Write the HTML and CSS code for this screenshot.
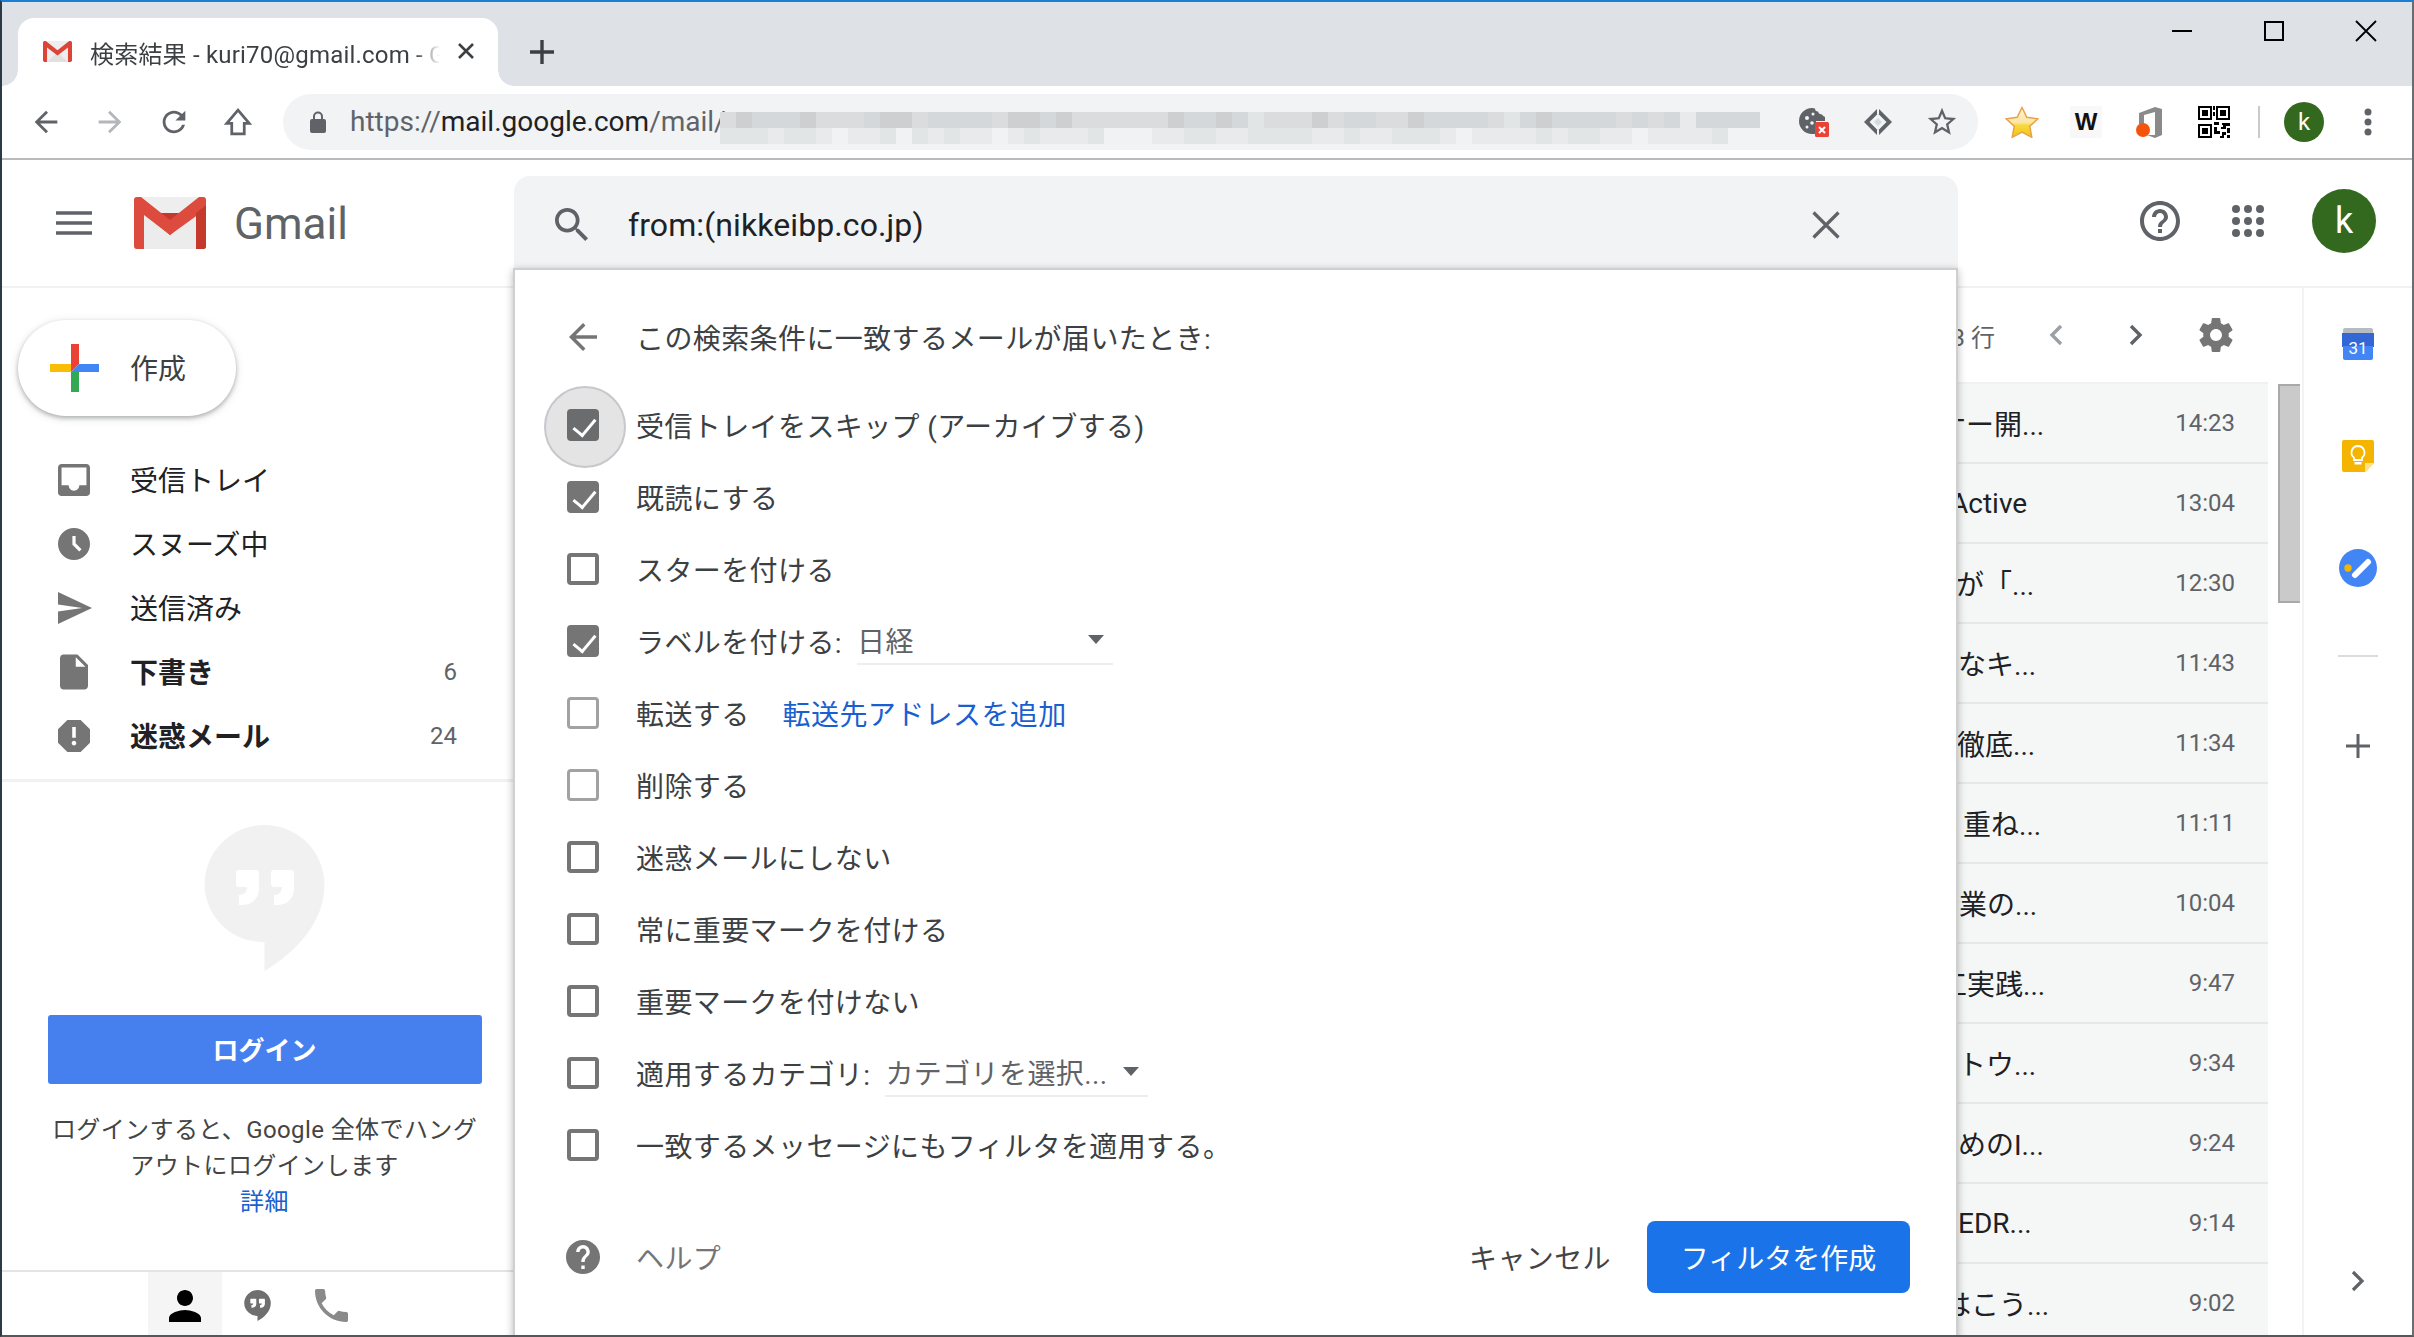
FILE: index.html
```html
<!DOCTYPE html>
<html lang="ja">
<head>
<meta charset="utf-8">
<title>検索結果 - kuri70@gmail.com - Gmail</title>
<link rel="stylesheet" href="styles.css">
</head>
<body>
<div class="window">
  <header class="tabstrip">
    <div class="tab">
      <svg class="favicon" viewBox="0 0 72 52"><rect width="72" height="52" rx="3" fill="#eee"/><path d="M10 52 36 28l26 24z" fill="#e0e0e0"/><path d="M0 3 3 0h4l29 23L65 0h4l3 3v46l-3 3h-7V16L36 36 10 16v36H3l-3-3z" fill="#dc4437"/></svg>
      <span class="tab-title">検索結果 - kuri70@gmail.com - G</span>
      <svg class="tab-close" viewBox="0 0 18 18"><path d="M2 2l14 14M16 2 2 16" stroke="#3c4043" stroke-width="2.6" fill="none"/></svg>
    </div>
    <svg class="newtab" viewBox="0 0 24 24"><path d="M12 0v24M0 12h24" stroke="#3c4043" stroke-width="3.4" fill="none"/></svg>
    <div class="winctl">
      <span class="winbtn"><svg width="20" height="20" viewBox="0 0 20 20"><path d="M0 10h20" stroke="#000" stroke-width="2" fill="none"/></svg></span>
      <span class="winbtn"><svg width="20" height="20" viewBox="0 0 20 20"><rect x="1" y="1" width="18" height="18" stroke="#000" stroke-width="2" fill="none"/></svg></span>
      <span class="winbtn"><svg width="22" height="22" viewBox="0 0 22 22"><path d="M1 1l20 20M21 1 1 21" stroke="#000" stroke-width="1.8" fill="none"/></svg></span>
    </div>
  </header>

  <nav class="toolbar">
    <span class="slot first"><svg width="34" height="34" viewBox="0 0 24 24"><path class="i-dark" d="M20 11H7.83l5.59-5.59L12 4l-8 8 8 8 1.41-1.41L7.83 13H20v-2z"/></svg></span>
    <span class="slot"><svg width="34" height="34" viewBox="0 0 24 24"><path fill="#b4b6b9" d="M12 4l-1.41 1.41L16.17 11H4v2h12.17l-5.58 5.59L12 20l8-8z"/></svg></span>
    <span class="slot"><svg width="34" height="34" viewBox="0 0 24 24"><path class="i-dark" d="M17.65 6.35C16.2 4.9 14.21 4 12 4c-4.42 0-7.99 3.58-7.99 8s3.57 8 7.99 8c3.73 0 6.84-2.55 7.73-6h-2.08c-.82 2.33-3.04 4-5.65 4-3.31 0-6-2.69-6-6s2.69-6 6-6c1.66 0 3.14.69 4.22 1.78L13 11h7V4l-2.35 2.35z"/></svg></span>
    <span class="slot"><svg width="30" height="30" viewBox="0 0 24 24"><path d="M12 2.5 3 13h4v8.500h10V13h4z" fill="none" stroke="#5f6368" stroke-width="2.200"/></svg></span>
    <div class="omnibox">
      <svg class="lock" viewBox="0 0 16 22"><path fill="#5f6368" d="M2 8h1V5.500a5 5 0 0 1 10 0V8h1a2 2 0 0 1 2 2v10a2 2 0 0 1-2 2H2a2 2 0 0 1-2-2V10a2 2 0 0 1 2-2zm3 0h6V5.500a3 3 0 0 0-6 0z"/></svg>
      <span class="url">https://<b>mail.google.com</b>/mail/</span>
      <div class="mosaic"><i class="c"></i><i class="a"></i><i class="b"></i><i class="b"></i><i class="b"></i><i class="a"></i><i class="c"></i><i class="c"></i><i class="c"></i><i class="b"></i><i class="a"></i><i class="a"></i><i class="c"></i><i class="b"></i><i class="b"></i><i class="b"></i><i class="b"></i><i class="c"></i><i class="a"></i><i class="a"></i><i class="b"></i><i class="a"></i><i class="c"></i><i class="c"></i><i class="c"></i><i class="c"></i><i class="c"></i><i class="c"></i><i class="a"></i><i class="b"></i><i class="b"></i><i class="a"></i><i class="b"></i><i class="d"></i><i class="c"></i><i class="c"></i><i class="c"></i><i class="a"></i><i class="c"></i><i class="b"></i><i class="b"></i><i class="c"></i><i class="c"></i><i class="a"></i><i class="b"></i><i class="b"></i><i class="b"></i><i class="b"></i><i class="c"></i><i class="d"></i><i class="b"></i><i class="a"></i><i class="b"></i><i class="b"></i><i class="b"></i><i class="b"></i><i class="c"></i><i class="b"></i><i class="c"></i><i class="b"></i><i class="e"></i><i class="b"></i><i class="b"></i><i class="b"></i><i class="b"></i><i class="d"></i><i class="d"></i><i class="d"></i><i class="e"></i><i class="d"></i><i class="d"></i><i class="e"></i><i class="f"></i><i class="e"></i><i class="e"></i><i class="d"></i><i class="f"></i><i class="d"></i><i class="e"></i><i class="d"></i><i class="e"></i><i class="e"></i><i class="f"></i><i class="e"></i><i class="d"></i><i class="e"></i><i class="e"></i><i class="e"></i><i class="d"></i><i class="f"></i><i class="f"></i><i class="f"></i><i class="e"></i><i class="e"></i><i class="d"></i><i class="d"></i><i class="e"></i><i class="e"></i><i class="d"></i><i class="d"></i><i class="d"></i><i class="d"></i><i class="e"></i><i class="e"></i><i class="d"></i><i class="e"></i><i class="e"></i><i class="d"></i><i class="d"></i><i class="d"></i><i class="e"></i><i class="f"></i><i class="e"></i><i class="e"></i><i class="e"></i><i class="e"></i><i class="d"></i><i class="e"></i><i class="d"></i><i class="d"></i><i class="e"></i><i class="e"></i><i class="f"></i><i class="e"></i><i class="e"></i><i class="e"></i><i class="e"></i><i class="d"></i></div>
      <div class="omni-actions">
        <span class="slot"><svg width="32" height="32" viewBox="0 0 32 32"><path fill="#5f6368" d="M14 2c1 0 2 .2 3 .5 0 2 1 3 3 3 .5 2 2 3 4 3 .5 1 2 2 3 2.500V15H18v13h-4A13 13 0 0 1 14 2z"/><circle cx="9" cy="12" r="2" fill="#f1f3f4"/><circle cx="15" cy="8" r="1.500" fill="#f1f3f4"/><circle cx="14" cy="17" r="1.800" fill="#f1f3f4"/><circle cx="9" cy="21" r="1.500" fill="#f1f3f4"/><rect x="17" y="16" width="14" height="15" rx="1.500" fill="#ea4335"/><path d="M21 21l6 6M27 21l-6 6" stroke="#fff" stroke-width="2" fill="none"/></svg></span>
        <span class="slot"><svg width="30" height="30" viewBox="0 0 30 30"><path fill="#5f6368" d="M15 1 29 15 15 29 1 15z"/><path fill="#f1f3f4" d="M15 6.500l8.500 8.500-8.500 8.500L6.500 15zM14 0h2v7h-2zM14 23h2v7h-2z"/><path fill="#5f6368" d="M15 11l4 4-4 4-4-4z" opacity=".18"/></svg></span>
        <span class="slot"><svg width="34" height="34" viewBox="0 0 24 24"><path fill="#5f6368" d="M22 9.240l-7.190-.62L12 2 9.190 8.630 2 9.240l5.460 4.730L5.820 21 12 17.270 18.180 21l-1.630-7.030L22 9.240zM12 15.400l-3.760 2.270 1-4.280-3.320-2.880 4.380-.38L12 6.100l1.710 4.040 4.380.38-3.320 2.880 1 4.280L12 15.400z"/></svg></span>
      </div>
    </div>
    <span class="slot ext-first"><svg width="34" height="32" viewBox="0 0 34 32"><defs><linearGradient id="sg" x1="0" y1="0" x2="0" y2="1"><stop offset="0" stop-color="#fff3e0"/><stop offset=".5" stop-color="#fbe7a0"/><stop offset=".6" stop-color="#f7d93a"/><stop offset="1" stop-color="#f3c21a"/></linearGradient></defs><path d="M17 1.500l4.800 9.800 11 1.500-8 7.500 2 11L17 26l-9.800 5.300 2-11-8-7.500 11-1.500z" fill="url(#sg)" stroke="#e8a24a" stroke-width="1.500"/></svg></span>
    <span class="slot"><span class="ext-w">W</span></span>
    <span class="slot"><svg width="30" height="32" viewBox="0 0 30 32"><path fill="#8a8a8a" d="M4 7 20 1l7 2v26l-7 3-8-3h8V6L9 9v9H4z"/><circle cx="8" cy="24" r="7" fill="#f4540c"/></svg></span>
    <span class="slot"><svg width="32" height="32" viewBox="0 0 32 32"><path fill="#000" d="M0 0h14v14H0zM2 2v10h10V2zM4 4h6v6H4zM18 0h14v14H18zm2 2v10h10V2zm2 2h6v6h-6zM0 18h14v14H0zm2 2v10h10V20zm2 2h6v6H4zM15 0h2v4h-2zM15 6h2v4h-2zM16 16h5v3h-5zM24 17h8v3h-4v3h-5v-2h2v-2h-1zM16 21h3v4h3v3h-6zM29 22h3v5h-3zM24 26h4v3h-2v3h-4v-2h2zM29 29h3v3h-3z"/></svg></span>
    <span class="sep"></span>
    <span class="avatar-sm">k</span>
    <span class="slot dots"><svg width="8" height="28" viewBox="0 0 8 28"><circle cx="4" cy="4" r="3.500" fill="#5f6368"/><circle cx="4" cy="14" r="3.500" fill="#5f6368"/><circle cx="4" cy="24" r="3.500" fill="#5f6368"/></svg></span>
  </nav>

  <header class="gm-head">
    <div class="gm-brand">
      <svg class="burger" viewBox="0 0 36 24"><path d="M0 2h36M0 12h36M0 22h36" stroke="#5f6368" stroke-width="3.400" fill="none"/></svg>
      <svg class="logo" viewBox="0 0 72 52"><rect width="72" height="52" rx="3" fill="#eeeeee"/><path d="M10 52 36 29l26 23z" fill="#e2e2e2"/><path d="M10 52V16l26 22 26-22v36z" fill="#ececec"/><path d="M10 16 36 38 62 16 72 3v46a3 3 0 0 1-3 3h-7V16z" fill="#c5392c"/><path d="M0 3a3 3 0 0 1 3-3h4l29 23L65 0h4a3 3 0 0 1 3 3v9L36 38 10 18v34H3a3 3 0 0 1-3-3z" fill="#dd4b3e"/><path d="M62 16 72 8v41a3 3 0 0 1-3 3h-7z" fill="#c5392c"/></svg>
      <span class="wordmark">Gmail</span>
    </div>
    <div class="searchbox">
      <svg class="s-icon" viewBox="3 3 18 18"><path fill="#5f6368" d="M15.500 14h-.79l-.28-.27C15.410 12.590 16 11.110 16 9.500 16 5.910 13.090 3 9.500 3S3 5.910 3 9.500 5.910 16 9.500 16c1.610 0 3.090-.59 4.230-1.570l.27.28v.79l5 4.990L20.490 19l-4.990-5zm-6 0C7.010 14 5 11.990 5 9.500S7.010 5 9.500 5 14 7.010 14 9.500 11.990 14 9.500 14z"/></svg>
      <span class="s-text">from:(nikkeibp.co.jp)</span>
      <svg class="s-close" viewBox="0 0 28 28"><path d="M1.500 1.500l25 25M26.500 1.500l-25 25" stroke="#5f6368" stroke-width="3.200" fill="none"/></svg>
    </div>
    <div class="gm-right">
      <svg class="h-help" viewBox="2 2 20 20"><path fill="#5f6368" d="M11 18h2v-2h-2v2zm1-16C6.480 2 2 6.480 2 12s4.480 10 10 10 10-4.480 10-10S17.520 2 12 2zm0 18c-4.410 0-8-3.590-8-8s3.590-8 8-8 8 3.590 8 8-3.590 8-8 8zm0-14c-2.210 0-4 1.790-4 4h2c0-1.100.9-2 2-2s2 .9 2 2c0 2-3 1.750-3 5h2c0-2.250 3-2.500 3-5 0-2.210-1.790-4-4-4z"/></svg>
      <svg class="h-apps" viewBox="0 0 32 32"><g fill="#5f6368"><circle cx="4" cy="4" r="4"/><circle cx="16" cy="4" r="4"/><circle cx="28" cy="4" r="4"/><circle cx="4" cy="16" r="4"/><circle cx="16" cy="16" r="4"/><circle cx="28" cy="16" r="4"/><circle cx="4" cy="28" r="4"/><circle cx="16" cy="28" r="4"/><circle cx="28" cy="28" r="4"/></g></svg>
      <span class="avatar-lg">k</span>
    </div>
  </header>

  <div class="gm-body">
    <aside class="sidebar">
      <button class="compose">
        <svg class="c-plus" viewBox="0 0 49 48"><polygon points="21,0 29,0 29,20 21,28" fill="#ea4335"/><polygon points="29,20 49,20 49,28 21,28" fill="#4285f4"/><polygon points="21,28 29,28 29,48 21,48" fill="#34a853"/><polygon points="0,20 21,20 21,28 0,28" fill="#fbbc05"/></svg>
        <span class="c-label">作成</span>
      </button>
      <ul class="nav">
        <li><span class="n-icon"><svg width="32" height="32" viewBox="3 3 18 18"><path d="M19 3H5c-1.100 0-2 .9-2 2v14c0 1.100.9 2 2 2h14c1.100 0 2-.9 2-2V5c0-1.100-.9-2-2-2zm0 12h-4c0 1.660-1.350 3-3 3s-3-1.340-3-3H5V5h14v10z"/></svg></span><span class="n-label">受信トレイ</span></li>
        <li><span class="n-icon"><svg width="32" height="32" viewBox="2 2 20 20"><path d="M11.990 2C6.470 2 2 6.480 2 12s4.470 10 9.990 10C17.520 22 22 17.520 22 12S17.520 2 11.990 2zm3.300 14.710L11 12.410V7h2v4.590l3.710 3.710-1.420 1.410z"/></svg></span><span class="n-label">スヌーズ中</span></li>
        <li><span class="n-icon"><svg width="34" height="32" viewBox="2 3 21 18" preserveAspectRatio="none"><path d="M2 21l21-9L2 3v7l15 2-15 2z"/></svg></span><span class="n-label">送信済み</span></li>
        <li class="strong"><span class="n-icon"><svg class="ni-draft" width="28" height="36" viewBox="4 2 16 20"><path d="M6 2c-1.100 0-2 .9-2 2v16c0 1.100.9 2 2 2h12c1.100 0 2-.9 2-2V8l-6-6H6zm7 7V3.500L18.500 9H13z"/></svg></span><span class="n-label">下書き</span><span class="n-count">6</span></li>
        <li class="strong"><span class="n-icon"><svg width="32" height="32" viewBox="3 3 18 18"><path d="M15.730 3H8.270L3 8.270v7.460L8.270 21h7.460L21 15.730V8.270L15.730 3zM12 17.300c-.72 0-1.300-.58-1.300-1.300 0-.72.58-1.300 1.300-1.300.72 0 1.300.58 1.300 1.300 0 .72-.58 1.300-1.300 1.300zm1-4.300h-2V7h2v6z"/></svg></span><span class="n-label">迷惑メール</span><span class="n-count">24</span></li>
      </ul>
      <section class="hangouts">
        <svg class="bubble" viewBox="0 0 121 146"><path fill="#f1f1f1" d="M60.500 0a60 60 0 0 1 60 60c0 38-30 68-60 86v-29a58.500 58.500 0 0 1-60-57 60 60 0 0 1 60-60z"/><path fill="#fff" d="M32 48a3 3 0 0 1 3-3h17a3 3 0 0 1 3 3v15c0 10-6 17-17 17h-3V70c5 0 8-3 8-8h-8a3 3 0 0 1-3-3zM67 48a3 3 0 0 1 3-3h17a3 3 0 0 1 3 3v15c0 10-6 17-17 17h-3V70c5 0 8-3 8-8h-8a3 3 0 0 1-3-3z"/></svg>
        <button class="login">ログイン</button>
        <p class="login-note">ログインすると、Google 全体でハング<br>アウトにログインします<br><a class="more">詳細</a></p>
      </section>
      <div class="side-tabs">
        <span class="s-tab on"><svg width="32" height="32" viewBox="4 4 16 16"><path d="M12 12c2.210 0 4-1.790 4-4s-1.790-4-4-4-4 1.790-4 4 1.790 4 4 4zm0 2c-2.670 0-8 1.340-8 4v2h16v-2c0-2.660-5.330-4-8-4z"/></svg></span>
        <span class="s-tab"><svg class="s-hang" width="27" height="31" viewBox="0 0 121 140"><path fill="#6f6f6f" d="M60.500 0a60 60 0 0 1 60 60c0 36-30 65-60 80v-23a58.500 58.500 0 0 1-60-57 60 60 0 0 1 60-60z"/><path fill="#fff" d="M28 42a3 3 0 0 1 3-3h21a3 3 0 0 1 3 3v20c0 10-6 18-19 18h-3V68c5 0 8-2 8-7h-10a3 3 0 0 1-3-3zM67 42a3 3 0 0 1 3-3h21a3 3 0 0 1 3 3v20c0 10-6 18-19 18h-3V68c5 0 8-2 8-7h-10a3 3 0 0 1-3-3z"/></svg></span>
        <span class="s-tab"><svg class="phone" width="33" height="33" viewBox="3 3 18 18"><path d="M6.620 10.790c1.440 2.830 3.760 5.140 6.590 6.590l2.200-2.200c.27-.27.67-.36 1.020-.24 1.120.37 2.330.57 3.570.57.55 0 1 .45 1 1V20c0 .55-.45 1-1 1-9.390 0-17-7.610-17-17 0-.55.45-1 1-1h3.500c.55 0 1 .45 1 1 0 1.250.2 2.450.57 3.570.11.35.03.74-.25 1.020l-2.200 2.200z"/></svg></span>
      </div>
    </aside>

    <main class="mail">
      <div class="mail-bar">
        <span class="m-count">1–50 / 1,283 行</span>
        <span class="m-btn"><svg width="14" height="22" viewBox="0 0 14 22"><path d="M12 2 3 11l9 9" fill="none" stroke="#9aa0a6" stroke-width="3.400"/></svg></span>
        <span class="m-btn"><svg width="14" height="22" viewBox="0 0 14 22"><path d="M2 2l9 9-9 9" fill="none" stroke="#5f6368" stroke-width="3.400"/></svg></span>
        <span class="m-btn"><svg width="34" height="34" viewBox="2 2 20 20"><path fill="#757575" d="M19.430 12.980c.04-.32.07-.64.07-.98s-.03-.66-.07-.98l2.110-1.650c.19-.15.24-.42.12-.64l-2-3.460c-.12-.22-.39-.3-.61-.22l-2.490 1c-.52-.4-1.080-.73-1.690-.98l-.38-2.650C14.460 2.180 14.250 2 14 2h-4c-.25 0-.46.18-.49.42l-.38 2.650c-.61.25-1.170.59-1.690.98l-2.490-1c-.23-.09-.49 0-.61.22l-2 3.460c-.13.22-.07.49.12.64l2.110 1.650c-.04.32-.07.65-.07.98s.03.66.07.98l-2.110 1.650c-.19.15-.24.42-.12.64l2 3.460c.12.22.39.3.61.22l2.490-1c.52.4 1.080.73 1.690.98l.38 2.650c.03.24.24.42.49.42h4c.25 0 .46-.18.49-.42l.38-2.650c.61-.25 1.170-.59 1.690-.98l2.490 1c.23.09.49 0 .61-.22l2-3.460c.12-.22.07-.49-.12-.64l-2.110-1.650zM12 15.500c-1.930 0-3.500-1.570-3.500-3.500s1.570-3.500 3.500-3.500 3.500 1.570 3.500 3.500-1.570 3.500-3.500 3.500z"/></svg></span>
      </div>
      <div class="mail-list">
        <div class="rows">
          <div class="row"><span class="subj">ナー開...</span><span class="time">14:23</span></div>
          <div class="row"><span class="subj">Active</span><span class="time">13:04</span></div>
          <div class="row"><span class="subj">が「...</span><span class="time">12:30</span></div>
          <div class="row"><span class="subj">要なキ...</span><span class="time">11:43</span></div>
          <div class="row"><span class="subj">徹底...</span><span class="time">11:34</span></div>
          <div class="row"><span class="subj">重ね...</span><span class="time">11:11</span></div>
          <div class="row"><span class="subj">企業の...</span><span class="time">10:04</span></div>
          <div class="row"><span class="subj">工実践...</span><span class="time">9:47</span></div>
          <div class="row"><span class="subj">トウ...</span><span class="time">9:34</span></div>
          <div class="row"><span class="subj">めのI...</span><span class="time">9:24</span></div>
          <div class="row"><span class="subj">EDR...</span><span class="time">9:14</span></div>
          <div class="row"><span class="subj">はこう...</span><span class="time">9:02</span></div>
        </div>
        <div class="scroll"><div class="thumb"></div></div>
      </div>
    </main>

    <aside class="rail">
      <svg class="r-cal" viewBox="0 0 32 32"><rect x="1" y="0" width="30" height="8" rx="2" fill="#b7bcc2"/><rect y="5" width="32" height="14" fill="#3367d6"/><path d="M1 18h30v12a2 2 0 0 1-2 2H3a2 2 0 0 1-2-2z" fill="#4285f4"/><text x="16" y="26" class="r-cal-t">31</text></svg>
      <svg class="r-keep" viewBox="0 0 32 32"><path d="M2 0h28a2 2 0 0 1 2 2v21l-9 9H2a2 2 0 0 1-2-2V2a2 2 0 0 1 2-2z" fill="#f4b400"/><path d="M32 23h-9v9z" fill="#fde293"/><path d="M16 6a6.500 6.500 0 0 0-4 11.600V20h8v-2.400A6.500 6.500 0 0 0 16 6z" fill="none" stroke="#fff" stroke-width="1.800"/><path d="M12.500 22h7v2.500h-7z" fill="#fff"/></svg>
      <svg class="r-tasks" viewBox="0 0 38 38"><circle cx="19" cy="19" r="19" fill="#4285f4"/><path d="M16 26 29 13" stroke="#fff" stroke-width="6" stroke-linecap="round" fill="none"/><circle cx="9" cy="19" r="3.700" fill="#f4b400"/></svg>
      <span class="r-sep"></span>
      <svg class="r-plus" viewBox="0 0 24 24"><path d="M12 0v24M0 12h24" stroke="#5f6368" stroke-width="3" fill="none"/></svg>
      <svg class="r-chev" viewBox="0 0 14 22"><path d="M2 2l9 9-9 9" fill="none" stroke="#5f6368" stroke-width="3.200"/></svg>
    </aside>
  </div>

  <section class="dialog">
    <div class="d-head">
      <svg class="d-back" viewBox="4 4 16 16"><path fill="#757575" d="M20 11H7.830l5.590-5.590L12 4l-8 8 8 8 1.410-1.410L7.830 13H20v-2z"/></svg>
      <span>この検索条件に一致するメールが届いたとき:</span>
    </div>
    <ul class="opts">
      <li><span class="cb on hover"></span><span>受信トレイをスキップ (アーカイブする)</span></li>
      <li><span class="cb on"></span><span>既読にする</span></li>
      <li><span class="cb"></span><span>スターを付ける</span></li>
      <li><span class="cb on"></span><span>ラベルを付ける:</span><span class="sel sel-label">日経</span></li>
      <li><span class="cb dim"></span><span>転送する</span><a class="addfwd">転送先アドレスを追加</a></li>
      <li><span class="cb dim"></span><span>削除する</span></li>
      <li><span class="cb"></span><span>迷惑メールにしない</span></li>
      <li><span class="cb"></span><span>常に重要マークを付ける</span></li>
      <li><span class="cb"></span><span>重要マークを付けない</span></li>
      <li><span class="cb"></span><span>適用するカテゴリ:</span><span class="sel sel-cat">カテゴリを選択...</span></li>
      <li><span class="cb"></span><span>一致するメッセージにもフィルタを適用する。</span></li>
    </ul>
    <div class="d-foot">
      <svg class="d-help" viewBox="2 2 20 20"><path fill="#757575" d="M12 2C6.480 2 2 6.480 2 12s4.480 10 10 10 10-4.480 10-10S17.520 2 12 2zm1 17h-2v-2h2v2zm2.070-7.750l-.9.92C13.450 12.900 13 13.500 13 15h-2v-.5c0-1.100.45-2.100 1.170-2.830l1.240-1.260c.37-.36.59-.86.59-1.410 0-1.100-.9-2-2-2s-2 .9-2 2H8c0-2.210 1.790-4 4-4s4 1.790 4 4c0 .88-.36 1.680-.93 2.250z"/></svg>
      <span class="d-helpt">ヘルプ</span>
      <span class="d-cancel">キャンセル</span>
      <button class="d-create">フィルタを作成</button>
    </div>
  </section>
</div>
</body>
</html>
```
FILE: styles.css
```css
* { box-sizing: border-box; }
html, body { margin: 0; padding: 0; }
body { width: 2414px; height: 1337px; overflow: hidden; background: #26323c; font-family: Roboto, "Noto Sans CJK JP", sans-serif; }
ul { list-style: none; margin: 0; padding: 0; }
p { margin: 0; }
button { border: 0; font: inherit; cursor: pointer; }

.window { position: relative; width: 2414px; height: 1337px; display: flex; flex-direction: column; overflow: hidden; background: #fff;
  border-top: 2px solid #1a7fd4; border-left: 2px solid #2b3a46; border-right: 2px solid #6a6d70; border-bottom: 2px solid #55585b; }

/* tab strip */
.tabstrip { flex: none; height: 84px; background: #dee1e6; display: flex; padding-left: 16px; }
.tab { position: relative; margin-top: 16px; width: 480px; height: 68px; background: #fff; border-radius: 16px 16px 0 0; display: flex; align-items: center; padding-left: 25px; }
.tab::before, .tab::after { content: ""; position: absolute; bottom: 0; width: 16px; height: 16px; }
.tab::before { left: -16px; background: radial-gradient(circle at 0 0, transparent 15.500px, #fff 16px); }
.tab::after { right: -16px; background: radial-gradient(circle at 100% 0, transparent 15.500px, #fff 16px); }
.favicon { width: 29px; height: 21px; flex: none; margin-top: -1px; }
.tab-title { margin-left: 18px; flex: none; width: 366px; font-size: 24px; letter-spacing: .2px; color: #3c4043; white-space: nowrap;
  -webkit-mask-image: linear-gradient(90deg, #000 325px, transparent 350px); mask-image: linear-gradient(90deg, #000 325px, transparent 350px); }
.tab-close { width: 18px; height: 18px; margin-left: 1px; flex: none; margin-top: -2px; }
.newtab { width: 24px; height: 24px; margin: 38px 0 0 32px; flex: none; }
.winctl { margin-left: auto; display: flex; }
.winbtn { width: 92px; height: 58px; display: flex; align-items: center; justify-content: center; }

/* toolbar */
.toolbar { flex: none; height: 74px; background: #fff; border-bottom: 2px solid #b8babc; display: flex; align-items: center; padding-bottom: 1px; }
.slot { flex: none; width: 64px; height: 56px; display: flex; align-items: center; justify-content: center; }
.slot.first { margin-left: 12px; }
.i-dark { fill: #5f6368; }
.omnibox { flex: none; margin-left: 13px; width: 1695px; height: 56px; border-radius: 28px; background: #f1f3f4; display: flex; align-items: center; padding-left: 27px; }
.lock { width: 16px; height: 22px; flex: none; }
.url { margin-left: 24px; width: 370px; flex: none; font-size: 28px; color: #5f6368; white-space: nowrap; }
.url b { font-weight: 400; color: #202124; }
.mosaic { flex: none; width: 1040px; height: 32px; margin-top: 12px; display: flex; flex-wrap: wrap; }
.mosaic i { display: block; width: 16px; height: 16px; }
.mosaic .a { background: #cdcfd1; }
.mosaic .b { background: #d5d8da; }
.mosaic .c { background: #dbdcde; }
.mosaic .d { background: #e2e5e6; }
.mosaic .e { background: #e8eaeb; }
.mosaic .f { background: #f0f2f3; }
.omni-actions { margin-left: auto; display: flex; padding-right: 4px; }
.ext-first { margin-left: 12px; }
.ext-w { width: 32px; height: 32px; background: #f8f8f8; font-family: "Liberation Sans", sans-serif; font-weight: 700; font-size: 24px; color: #111; display: flex; align-items: center; justify-content: center; }
.sep { flex: none; width: 2px; height: 32px; background: #c8cacc; margin-left: 12px; }
.avatar-sm { flex: none; margin-left: 24px; width: 40px; height: 40px; border-radius: 50%; background: #33691e; color: #fff; font-size: 24px; display: flex; align-items: center; justify-content: center; }
.dots { margin-left: 12px; }

/* gmail header */
.gm-head { flex: none; height: 128px; border-bottom: 2px solid #f1f1f1; display: grid; grid-template-columns: 512px 1444px 1fr; }
.gm-brand { display: flex; align-items: center; padding-left: 54px; }
.burger { width: 36px; height: 24px; flex: none; }
.logo { width: 72px; height: 54px; margin-left: 42px; flex: none; }
.wordmark { margin-left: 28px; font-size: 44px; color: #5f6368; padding-top: 2px; }
.searchbox { margin-top: 16px; height: 96px; background: #f1f3f4; border-radius: 16px 16px 0 0; display: flex; align-items: center; padding: 2px 118px 0 41px; }
.s-icon { width: 34px; height: 34px; flex: none; }
.s-text { margin-left: 39px; font-size: 32px; letter-spacing: .1px; color: #202124; }
.s-close { margin-left: auto; width: 28px; height: 28px; flex: none; }
.gm-right { display: flex; align-items: center; padding-left: 182px; padding-bottom: 4px; }
.h-help { width: 40px; height: 40px; flex: none; }
.h-apps { width: 32px; height: 32px; margin-left: 52px; flex: none; }
.avatar-lg { margin-left: 48px; flex: none; width: 64px; height: 64px; border-radius: 50%; background: #33691e; color: #fff; font-size: 36px; display: flex; align-items: center; justify-content: center; }

/* body */
.gm-body { flex: 1; display: flex; min-height: 0; }
.sidebar { flex: none; width: 512px; display: flex; flex-direction: column; }
.compose { margin: 32px 0 0 16px; width: 218px; height: 96px; flex: none; border-radius: 48px; background: #fff; box-shadow: 0 2px 4px rgba(60,64,67,.35), 0 2px 10px rgba(60,64,67,.15); display: flex; align-items: center; padding-left: 32px; font-size: 28px; color: #3c4043; }
.c-plus { width: 49px; height: 48px; flex: none; margin-right: 31px; }
.c-label { padding-bottom: 3px; }
.nav { margin-top: 32px; }
.nav li { height: 64px; display: flex; align-items: center; padding: 0 57px 0 56px; font-size: 28px; color: #202124; }
.n-icon { width: 72px; flex: none; display: flex; }
.n-icon svg { fill: #757575; display: block; }
.n-label { padding-bottom: 3px; }
.ni-draft { margin-left: 2px; }
.strong .n-label { font-weight: 700; }
.n-count { margin-left: auto; font-size: 24px; color: #5f6368; }
.hangouts { margin-top: 11px; border-top: 3px solid #f1f1f1; padding: 43px 0 0 13px; display: flex; flex-direction: column; align-items: center; }
.bubble { width: 121px; height: 146px; flex: none; }
.login { margin-top: 44px; width: 434px; height: 69px; flex: none; border-radius: 3px; background: #4680ef; color: #fff; font-size: 26px; font-weight: 700; padding-bottom: 3px; }
.login-note { margin-top: 28px; font-size: 24px; line-height: 36px; letter-spacing: .4px; color: #444; text-align: center; white-space: nowrap; }
.more { color: #1a5fd0; }
.side-tabs { margin-top: auto; height: 65px; border-top: 2px solid #e4e4e4; display: flex; padding-left: 146px; }
.s-tab { width: 74px; display: flex; align-items: center; justify-content: center; padding-top: 4px; }
.s-tab.on { background: #f5f5f5; }
.s-hang { margin-right: 4px; }
.phone { fill: #8a8a8a; margin-right: 4px; }

/* mail list behind the dialog */
.mail { flex: none; width: 1788px; display: flex; flex-direction: column; min-height: 0; overflow: hidden; }
.mail-bar { flex: none; height: 94px; display: flex; align-items: center; justify-content: flex-end; padding-right: 46px; }
.m-count { font-size: 24px; color: #5f6368; margin-right: 21px; white-space: nowrap; }
.m-btn { width: 80px; height: 80px; display: flex; align-items: center; justify-content: center; flex: none; }
.mail-list { flex: 1; display: flex; min-height: 0; }
.rows { flex: none; width: 1754px; border-top: 2px solid #f0f1f1; }
.row { height: 80px; background: #f5f7f7; border-bottom: 2px solid #e4e8eb; display: flex; align-items: center; padding-right: 33px; font-size: 28px; color: #202124; }
.time { margin-left: auto; font-size: 24px; color: #5f6368; }
.row:nth-child(1) .subj { margin-left: 1424px; }
.row:nth-child(2) .subj { margin-left: 1436px; }
.row:nth-child(3) .subj { margin-left: 1442px; }
.row:nth-child(4) .subj { margin-left: 1416px; }
.row:nth-child(5) .subj { margin-left: 1443px; }
.row:nth-child(6) .subj { margin-left: 1449px; }
.row:nth-child(7) .subj { margin-left: 1417px; }
.row:nth-child(8) .subj { margin-left: 1425px; }
.row:nth-child(9) .subj { margin-left: 1444px; }
.row:nth-child(10) .subj { margin-left: 1444px; }
.row:nth-child(11) .subj { margin-left: 1444px; }
.row:nth-child(12) .subj { margin-left: 1429px; }
.scroll { margin-left: 10px; flex: none; width: 22px; padding-top: 2px; }
.thumb { height: 219px; background: #cacaca; border: 2px solid #a9a9a9; border-right: 0; }

/* right rail */
.rail { flex: 1; border-left: 2px solid #f1f3f4; display: flex; flex-direction: column; align-items: center; padding-top: 40px; padding-bottom: 43px; }
.r-cal { width: 32px; height: 32px; flex: none; }
.r-cal-t { font-family: Roboto, sans-serif; font-size: 17px; fill: #fff; text-anchor: middle; }
.r-keep { width: 32px; height: 32px; margin-top: 80px; flex: none; }
.r-tasks { width: 38px; height: 38px; margin-top: 77px; flex: none; }
.r-sep { width: 40px; height: 2px; margin-top: 68px; background: #dadce0; flex: none; }
.r-plus { width: 24px; height: 24px; margin-top: 77px; flex: none; }
.r-chev { width: 14px; height: 22px; margin-top: auto; flex: none; }

/* filter dialog */
.dialog { position: absolute; left: 511px; top: 266px; width: 1445px; bottom: -10px; background: #fff; border: 2px solid #cfcfcf; box-shadow: 0 2px 8px rgba(0,0,0,.28); padding: 31px 46px 0 52px; font-size: 28px; letter-spacing: .4px; color: #3c4043; z-index: 5; display: flex; flex-direction: column; }
.d-head { height: 72px; display: flex; align-items: center; flex: none; }
.d-back { width: 28px; height: 28px; flex: none; margin: 0 39px 0 2px; }
.opts { margin-top: 16px; }
.opts li { height: 72px; display: flex; align-items: center; white-space: nowrap; }
.cb { position: relative; flex: none; width: 32px; height: 32px; margin-right: 37px; border: 4px solid #757575; border-radius: 4px; background: #fff; }
.cb.dim { border-color: #a2a2a2; border-width: 3px; }
.cb.on { background: #757575; }
.cb.on::after { content: ""; position: absolute; left: 7px; top: 1px; width: 10px; height: 19px; border: solid #fff; border-width: 0 3px 3px 0; transform: rotate(40deg); }
.cb.hover { background: #6b6c6e; border-color: #6b6c6e; z-index: 1; }
.opts li:first-child { position: relative; }
.opts li:first-child::before { content: ""; position: absolute; left: -23px; top: -3px; width: 78px; height: 78px; border-radius: 50%; background: #e4e4e4; border: 2px solid #c6c8cc; }
.sel { position: relative; display: flex; align-items: center; height: 48px; border-bottom: 2px solid #eeeeee; color: #5f6368; }
.sel::after { content: ""; position: absolute; top: 18px; width: 0; height: 0; border: 8px solid transparent; border-top: 9px solid #5f6368; border-bottom: 0; }
.sel-label { margin-left: 15px; width: 256px; }
.sel-label::after { right: 9px; }
.sel-cat { margin-left: 15px; width: 263px; }
.sel-cat::after { right: 9px; }
.addfwd { margin-left: 33px; color: #1a5fd0; }
.d-foot { margin-top: 40px; height: 72px; flex: none; display: flex; align-items: center; }
.d-help { width: 34px; height: 34px; flex: none; margin: 0 36px 0 -1px; }
.d-helpt { color: #757575; }
.d-cancel { margin-left: auto; color: #444; }
.d-create { margin-left: 36px; width: 263px; height: 72px; border-radius: 8px; background: #1a73e8; color: #fff; font-size: 28px; }
```
